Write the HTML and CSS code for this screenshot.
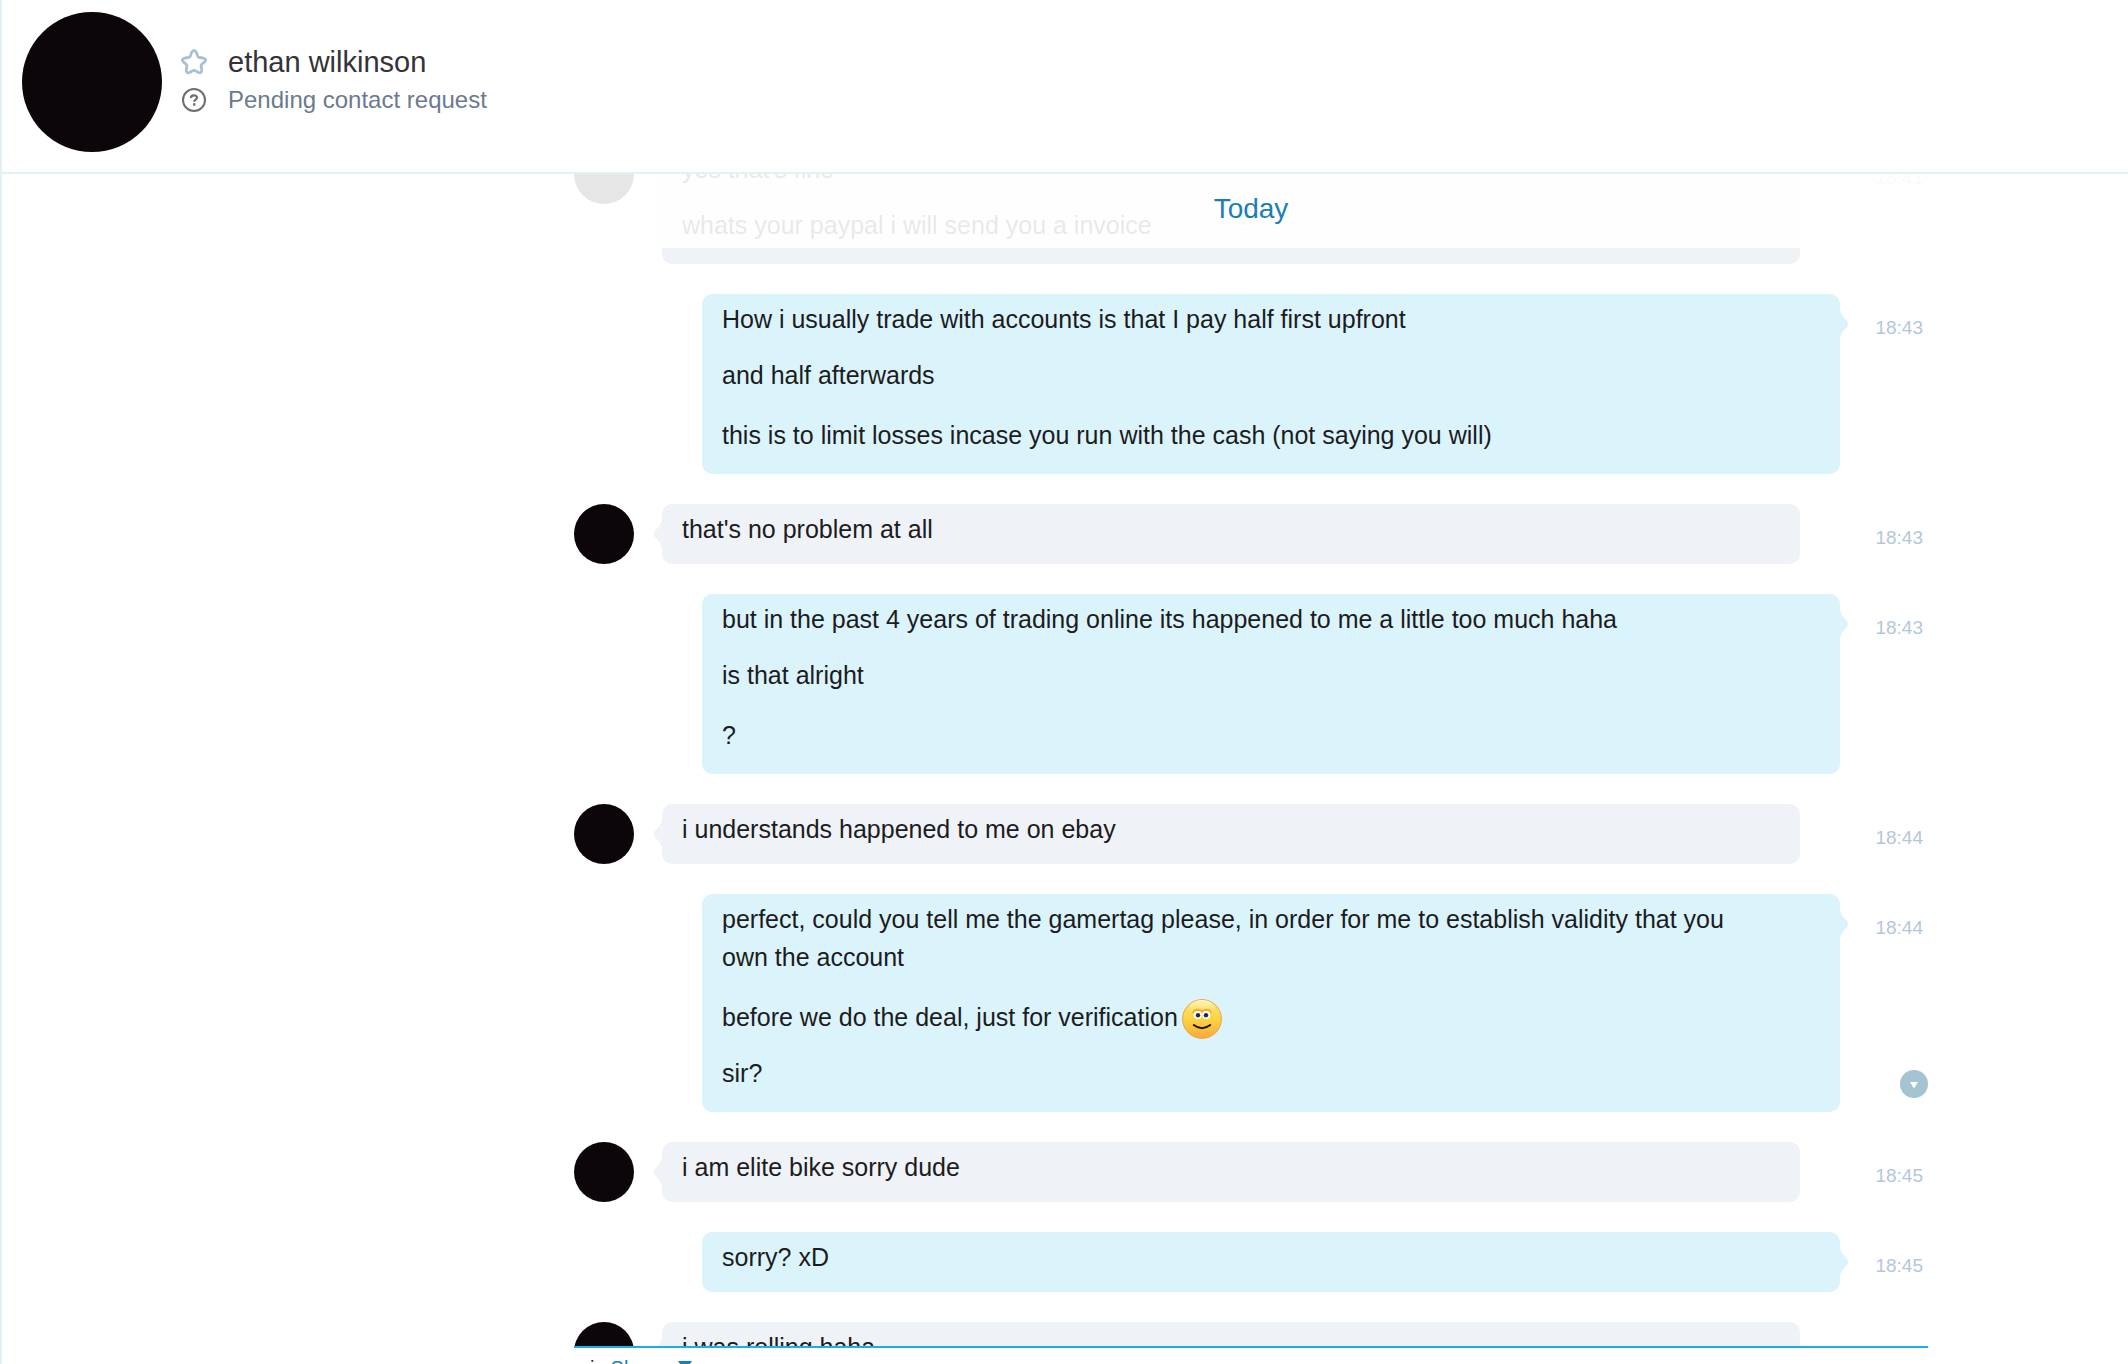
FILE: index.html
```html
<!DOCTYPE html>
<html lang="en">

<head>
    <meta charset="UTF-8">
    <meta name="viewport" content="width=device-width, initial-scale=1.0">
    <title>Chat</title>
    <link rel="stylesheet" href="styles.css">
</head>

<body>
    <header class="header">
        <div class="avatar avatar-large"></div>
        <div class="contact">
            <div class="contact-row name-row">
                <button class="star" aria-label="Add to favourites">
                    <svg width="26" height="26" viewBox="0 0 26 26">
                        <path d="M10.6 3.4 Q13 -.4 15.4 3.4 L16.6 6.9 Q17 8.2 18.3 8.5 L22 9 Q26.4 10.2 23.4 13.1 L20.8 15.3 Q19.9 16.2 20.1 17.4 L20.8 20.6 Q20.8 24.8 17.4 23.5 L14.4 21.8 Q13 21 11.6 21.8 L8.6 23.5 Q5.2 24.8 5.2 20.6 L5.9 17.4 Q6.1 16.2 5.2 15.3 L2.6 13.1 Q-.4 10.2 4 9 L7.7 8.5 Q9 8.2 9.4 6.9 Z" fill="none" stroke="#a9c0d3" stroke-width="2.8" stroke-linejoin="round" />
                    </svg>
                </button>
                <h1 class="name">ethan wilkinson</h1>
            </div>
            <div class="contact-row">
                <svg width="26" height="26" viewBox="0 0 26 26">
                    <circle cx="13" cy="13" r="11" fill="none" stroke="#6d6e70" stroke-width="2" />
                    <path d="M9.9 11 C9.9 7.6 16 7.6 16 10.6 C16 12.6 13.2 12.6 13.2 14.8" fill="none" stroke="#6d6e70" stroke-width="2.2" />
                    <rect x="12" y="16.2" width="2.4" height="2.4" fill="#6d6e70" />
                </svg>
                <p class="status">Pending contact request</p>
            </div>
        </div>
    </header>

    <main class="chat">
        <div class="day">Today</div>
        <div class="log">
            <div class="row received">
                <div class="avatar"></div>
                <div class="bubble">
                    <p>yes that's fine</p>
                    <p>whats your paypal i will send you a invoice</p>
                </div>
                <div class="side"><time>18:41</time></div>
            </div>
            <div class="row sent">
                <div class="bubble">
                    <p>How i usually trade with accounts is that I pay half first upfront</p>
                    <p>and half afterwards</p>
                    <p>this is to limit losses incase you run with the cash (not saying you will)</p>
                </div>
                <div class="side"><time>18:43</time></div>
            </div>
            <div class="row received">
                <div class="avatar"></div>
                <div class="bubble">
                    <p>that's no problem at all</p>
                </div>
                <div class="side"><time>18:43</time></div>
            </div>
            <div class="row sent">
                <div class="bubble">
                    <p>but in the past 4 years of trading online its happened to me a little too much haha</p>
                    <p>is that alright</p>
                    <p>?</p>
                </div>
                <div class="side"><time>18:43</time></div>
            </div>
            <div class="row received">
                <div class="avatar"></div>
                <div class="bubble">
                    <p>i understands happened to me on ebay</p>
                </div>
                <div class="side"><time>18:44</time></div>
            </div>
            <div class="row sent">
                <div class="bubble">
                    <p>perfect, could you tell me the gamertag please, in order for me to establish validity that you own the account</p>
                    <p class="with-emoji">before we do the deal, just for verification<svg class="emoji" width="40" height="40" viewBox="0 0 40 40">
                        <defs>
                            <linearGradient id="face" x1="0" y1="0" x2="0" y2="1">
                                <stop offset="0" stop-color="#fce36c" />
                                <stop offset=".5" stop-color="#fbd444" />
                                <stop offset="1" stop-color="#f9a93a" />
                            </linearGradient>
                            <linearGradient id="shine" x1="0" y1="0" x2="0" y2="1">
                                <stop offset="0" stop-color="#fff6c4" />
                                <stop offset="1" stop-color="#fde88a" stop-opacity="0" />
                            </linearGradient>
                        </defs>
                        <circle cx="20" cy="20" r="19.4" fill="url(#face)" stroke="#f0a04a" stroke-width="1" />
                        <ellipse cx="20" cy="8.5" rx="12.5" ry="7.5" fill="url(#shine)" />
                        <path d="M11 14 Q12 10.5 16 10.8 Q19 11 20 12.5 Q21 11 24 10.8 Q28 10.5 29 14" fill="none" stroke="#f5ab2c" stroke-width="2" />
                        <circle cx="15.7" cy="16" r="4" fill="#fff" />
                        <circle cx="24.3" cy="16" r="4" fill="#fff" />
                        <circle cx="16" cy="16.2" r="2.2" fill="#20264e" />
                        <circle cx="24" cy="16.2" r="2.2" fill="#20264e" />
                        <path d="M11.8 26 Q20 32.4 28.2 26" fill="none" stroke="#1c1405" stroke-width="2" stroke-linecap="round" />
                    </svg></p>
                    <p>sir?</p>
                </div>
                <div class="side">
                    <time>18:44</time>
                    <button class="scroll-down" aria-label="Scroll to latest">
                        <svg width="28" height="28" viewBox="0 0 28 28">
                            <path d="M10 12 H18 L14.6 17.6 Q14 18.4 13.4 17.6 Z" fill="#fff" />
                        </svg>
                    </button>
                </div>
            </div>
            <div class="row received">
                <div class="avatar"></div>
                <div class="bubble">
                    <p>i am elite bike sorry dude</p>
                </div>
                <div class="side"><time>18:45</time></div>
            </div>
            <div class="row sent">
                <div class="bubble">
                    <p>sorry? xD</p>
                </div>
                <div class="side"><time>18:45</time></div>
            </div>
            <div class="row received">
                <div class="avatar"></div>
                <div class="bubble">
                    <p>i was rolling haha</p>
                </div>
                <div class="side"></div>
            </div>
        </div>
    </main>

    <footer class="composer">
        <label for="via">via</label>
        <select id="via" class="via">
            <option>Skype</option>
            <option>SMS</option>
        </select>
        <svg width="14" height="10" viewBox="0 0 14 10">
            <path d="M0 0 H14 L7 10 Z" fill="#1a7fb8" />
        </svg>
    </footer>
</body>

</html>
```
FILE: styles.css
```css
* {
    margin: 0;
    padding: 0;
    box-sizing: border-box;
}

body {
    display: flex;
    flex-direction: column;
    height: 100vh;
    overflow: hidden;
    border-left: 2px solid #e5f0f5;
    background: #fff;
    color: #1c1c1e;
    font-family: "Liberation Sans", Arial, sans-serif;
    font-size: 25px;
}

button {
    display: flex;
    border: none;
    background: none;
    cursor: pointer;
}

.avatar {
    flex: none;
    width: 60px;
    height: 60px;
    border-radius: 50%;
    background: #0c060a;
}

.avatar-large {
    width: 140px;
    height: 140px;
}

/* contact header */
.header {
    flex: none;
    display: flex;
    align-items: flex-start;
    gap: 19px;
    padding: 12px 20px 20px;
    border-bottom: 2px solid #e5f0f5;
}

.contact {
    padding-top: 32px;
}

.contact-row {
    display: flex;
    align-items: center;
    gap: 21px;
    height: 40px;
}

.name-row {
    height: 36px;
}

.name {
    color: #333338;
    font-size: 29px;
    font-weight: normal;
}

.status {
    color: #6b7a90;
    font-size: 24px;
}

/* conversation */
.chat {
    position: relative;
    flex: 1;
    min-height: 0;
    overflow: hidden;
}

.day {
    position: absolute;
    top: 0;
    left: 0;
    right: 0;
    z-index: 2;
    height: 74px;
    padding: 0 200px 0 572px;
    background: rgba(255, 255, 255, 0.9);
    color: #1a7fb8;
    font-size: 28px;
    line-height: 70px;
    text-align: center;
}

.log {
    display: flex;
    flex-direction: column;
    gap: 30px;
    /* scrolled a little past the first message */
    margin: -30px 200px 0 572px;
}

.row {
    display: flex;
}

.received .avatar {
    margin-right: 28px;
}

.sent {
    padding-left: 128px;
}

.bubble {
    position: relative;
    flex: 1;
    border-radius: 10px;
    background: #dbf4fc;
}

.received .bubble {
    background: #eff2f7;
}

.bubble::after {
    content: "";
    position: absolute;
    top: 15px;
    left: 100%;
    width: 8px;
    height: 30px;
    background: inherit;
    clip-path: path("M0 0 C1 9 8 10 8 15 C8 20 1 21 0 30 Z");
}

.received .bubble::after {
    left: auto;
    right: 100%;
    clip-path: path("M8 0 C7 9 0 10 0 15 C0 20 7 21 8 30 Z");
}

.bubble p {
    padding: 2px 80px 20px 20px;
    line-height: 38px;
}

.bubble p:first-child,
.bubble .with-emoji {
    padding-top: 6px;
    padding-bottom: 16px;
}

.emoji {
    margin: -4px 4px;
    vertical-align: -9px;
}

.side {
    flex: none;
    display: flex;
    flex-direction: column;
    justify-content: space-between;
    align-items: flex-end;
    width: 88px;
}

.received .side {
    width: 128px;
}

.side time {
    height: 60px;
    padding-right: 5px;
    color: #b4c7da;
    font-size: 19px;
    line-height: 67px;
}

.scroll-down {
    margin-bottom: 14px;
    border-radius: 50%;
    background: #a4c4d1;
}

/* message box */
.composer {
    flex: none;
    display: flex;
    align-items: center;
    gap: 5px;
    height: 42px;
    margin: 0 200px -24px 572px;
    padding-left: 6px;
    border-top: 2px solid #1daeea;
    font-size: 20px;
}

.composer svg {
    margin: 0 0 4px 6px;
}

.via {
    appearance: none;
    border: none;
    background: none;
    color: #1a7fb8;
    font: inherit;
    cursor: pointer;
}
```
